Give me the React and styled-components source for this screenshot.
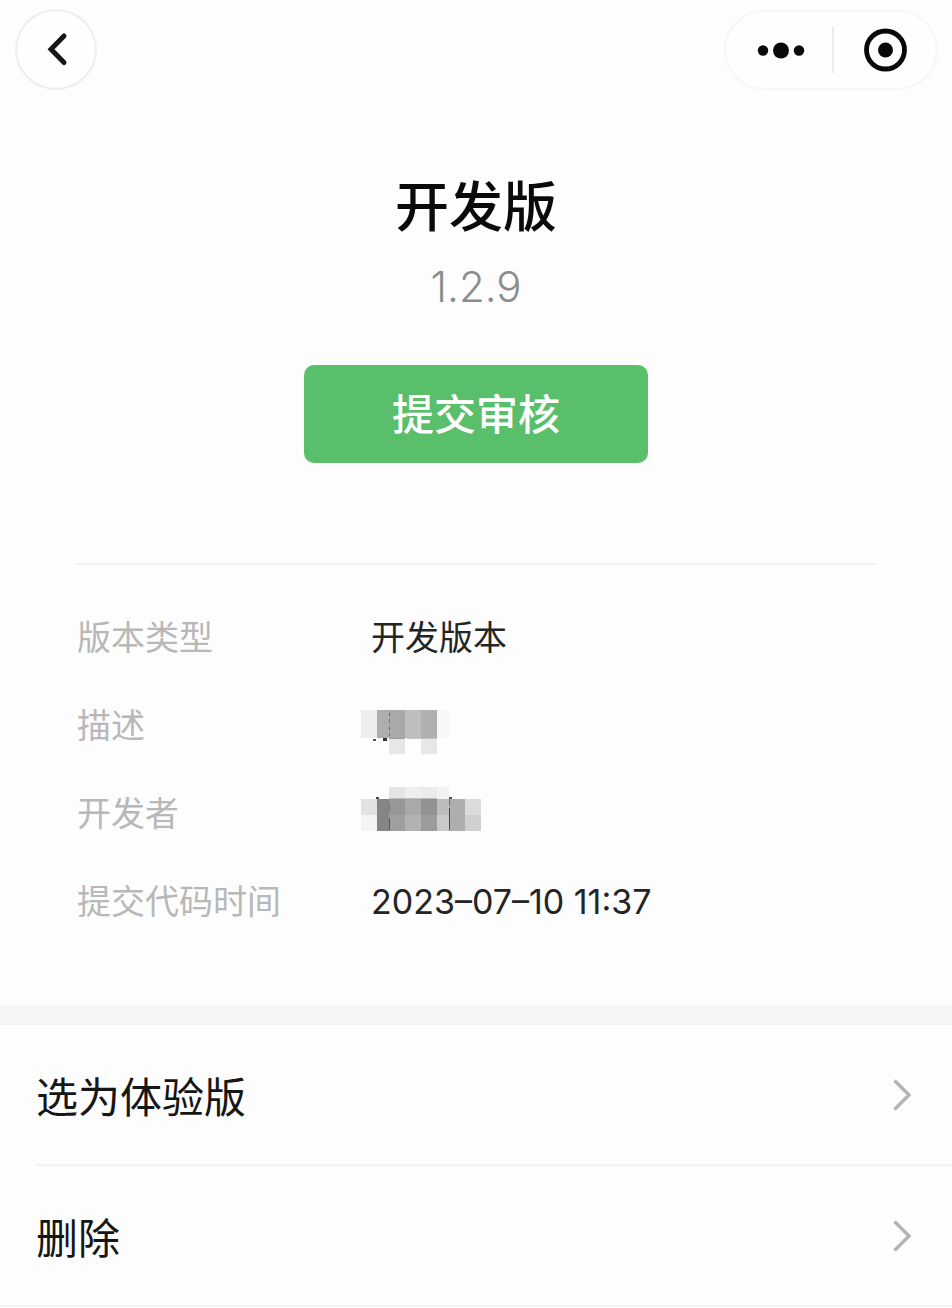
import React from 'react';
import styled, { createGlobalStyle } from 'styled-components';

const GlobalStyle = createGlobalStyle`
  * {
    box-sizing: border-box;
  }

  body {
    margin: 0;
    background: #fdfdfd;
    color: #1a1a1a;
    font-family: Inter, "Noto Sans CJK SC", sans-serif;
  }

  button {
    font-family: inherit;
    cursor: pointer;
  }
`;

const NavBar = styled.header`
  display: flex;
  justify-content: space-between;
  align-items: center;
  padding: 9px 14px 0 15px;
`;

const BackButton = styled.button`
  display: flex;
  width: 82px;
  height: 81px;
  padding: 0;
  border: 2px solid #eeeeee;
  border-radius: 50%;
  background: #fefefe;
`;

const Capsule = styled.div`
  display: flex;
  align-items: center;
  width: 214px;
  height: 80px;
  padding-left: 4px;
  border: 2px solid #f6f6f6;
  border-radius: 40px;
  background: #fefefe;
`;

const CapsuleButton = styled.button`
  display: flex;
  flex: 1;
  justify-content: center;
  align-items: center;
  height: 100%;
  padding: 0;
  border: 0;
  background: none;
`;

const CapsuleDivider = styled.span`
  width: 2px;
  height: 46px;
  background: #ececec;
`;

const Hero = styled.section`
  display: flex;
  flex-direction: column;
  align-items: center;
  padding: 80px 76px 100px;
`;

const Title = styled.h1`
  margin: 0;
  color: #0a0a0a;
  font-size: 54px;
  font-weight: 500;
  line-height: 76px;
`;

const Version = styled.p`
  margin: 15px 0 52px;
  color: #8c8c8c;
  font-size: 42px;
  font-weight: 300;
  line-height: 52px;
`;

const SubmitButton = styled.button`
  min-width: 344px;
  padding: 20px 40px 18px;
  border: 0;
  border-radius: 10px;
  background: #5abf6b;
  color: #ffffff;
  font-size: 42px;
  font-weight: 500;
  line-height: 60px;
`;

const Details = styled.dl`
  display: flex;
  flex-direction: column;
  gap: 38px;
  margin: 0 76px;
  padding: 48px 0 78px;
  border-top: 2px solid #f1f1f1;
`;

const DetailRow = styled.div`
  display: grid;
  grid-template-columns: 294px 1fr;
  padding-left: 1px;
  font-size: 34px;
  line-height: 50px;
`;

const Label = styled.dt`
  color: #b8b8b8;
`;

const Value = styled.dd`
  height: 50px;
  margin: 0;
  color: #242424;
`;

const Mosaic = styled.svg`
  display: block;
  margin-left: -10px;
  overflow: visible;
`;

const Actions = styled.nav`
  border-top: 20px solid #f5f5f5;
  border-bottom: 2px solid #f3f3f3;
`;

const ActionRow = styled.button`
  display: flex;
  justify-content: space-between;
  align-items: center;
  width: calc(100% - 36px);
  margin-left: 36px;
  padding: 40px 40px 40px 0;
  border: 0;
  border-bottom: ${props => (props.$last ? '0' : '2px solid #f3f3f3')};
  background: none;
  color: #161616;
  font-size: 42px;
  line-height: 53px;
  text-align: left;
`;

const ActionText = styled.span`
  padding-top: 6px;
`;

// each cell: x, y, width, height, fill
const descriptionCells = [
  [0, 9, 16, 28, '#eeeeee'],
  [16, 9, 12, 28, '#adadad'],
  [28, 9, 16, 28, '#a9a9a9'],
  [44, 9, 16, 28, '#bebebe'],
  [60, 9, 16, 28, '#b0b0b0'],
  [76, 9, 12, 28, '#f8f8f8'],
  [28, 37, 16, 16, '#e7e7e7'],
  [60, 37, 16, 16, '#e7e7e7'],
  [12, 38, 3, 2, '#555555'],
  [22, 37, 4, 3, '#333333'],
  [28, 37, 16, 1, '#999999'],
  [46, 37, 30, 1, '#c4c4c4'],
  [28, 12, 1, 3, '#666666'],
  [28, 18, 1, 4, '#777777'],
  [28, 26, 1, 3, '#666666'],
  [28, 32, 1, 3, '#777777'],
];

const developerCells = [
  [28, -2, 16, 12, '#e4e4e4'],
  [44, -2, 16, 12, '#eeeeee'],
  [60, -2, 16, 12, '#ebebeb'],
  [76, -2, 12, 12, '#f3f3f3'],
  [0, 10, 16, 16, '#e2e2e2'],
  [0, 26, 16, 16, '#f4f4f4'],
  [16, 10, 12, 32, '#858585'],
  [28, 10, 16, 16, '#979797'],
  [28, 26, 16, 16, '#9f9f9f'],
  [44, 10, 16, 16, '#a9a9a9'],
  [44, 26, 16, 16, '#b2b2b2'],
  [60, 10, 16, 16, '#929292'],
  [60, 26, 16, 16, '#9b9b9b'],
  [76, 10, 12, 16, '#bcbcbc'],
  [76, 26, 12, 16, '#cacaca'],
  [88, 10, 16, 32, '#aeaeae'],
  [104, 10, 16, 16, '#dcdcdc'],
  [104, 26, 16, 16, '#d0d0d0'],
  [15, 8, 3, 2, '#444444'],
  [28, 9, 48, 1, '#bbbbbb'],
  [88, 8, 3, 2, '#555555'],
  [28, 14, 1, 8, '#777777'],
  [28, 29, 1, 12, '#555555'],
  [88, 10, 1, 7, '#777777'],
  [88, 19, 1, 22, '#484848'],
];

const Pixels = ({ cells }) => (
  <Mosaic width="120" height="48" aria-hidden="true" shapeRendering="crispEdges">
    {cells.map(([x, y, width, height, fill], index) => (
      <rect key={index} x={x} y={y} width={width} height={height} fill={fill} />
    ))}
  </Mosaic>
);

const Chevron = () => (
  <svg width="20" height="34" viewBox="0 0 20 34" fill="none" aria-hidden="true">
    <path d="M2.5 2.5L17 17L2.5 31.5" stroke="#b4b4b4" strokeWidth="3.4" />
  </svg>
);

const details = [
  { label: '版本类型', value: '开发版本' },
  { label: '描述', value: <Pixels cells={descriptionCells} /> },
  { label: '开发者', value: <Pixels cells={developerCells} /> },
  { label: '提交代码时间', value: '2023–07–10 11:37' },
];

const actions = ['选为体验版', '删除'];

function App() {
  return (
    <>
      <GlobalStyle />
      <NavBar>
        <BackButton aria-label="返回">
          <svg width="78" height="77" viewBox="0 0 78 77" fill="none">
            <path
              d="M47 25L34 38.3L47 51.5"
              stroke="#161616"
              strokeWidth="5"
              strokeLinecap="round"
            />
          </svg>
        </BackButton>
        <Capsule>
          <CapsuleButton aria-label="更多">
            <svg width="50" height="20" viewBox="0 0 50 20" fill="#080808">
              <circle cx="7" cy="10.5" r="5.2" />
              <circle cx="25" cy="10.5" r="8" />
              <circle cx="43" cy="10.5" r="5.2" />
            </svg>
          </CapsuleButton>
          <CapsuleDivider />
          <CapsuleButton aria-label="关闭">
            <svg width="46" height="46" viewBox="0 0 46 46" fill="none">
              <circle cx="23.5" cy="23" r="19" stroke="#080808" strokeWidth="4.8" />
              <circle cx="23.5" cy="23" r="7.5" fill="#080808" />
            </svg>
          </CapsuleButton>
        </Capsule>
      </NavBar>
      <main>
        <Hero>
          <Title>开发版</Title>
          <Version>1.2.9</Version>
          <SubmitButton>提交审核</SubmitButton>
        </Hero>
        <Details>
          {details.map(({ label, value }) => (
            <DetailRow key={label}>
              <Label>{label}</Label>
              <Value>{value}</Value>
            </DetailRow>
          ))}
        </Details>
        <Actions>
          {actions.map((text, index) => (
            <ActionRow key={text} $last={index === actions.length - 1}>
              <ActionText>{text}</ActionText>
              <Chevron />
            </ActionRow>
          ))}
        </Actions>
      </main>
    </>
  );
}

export default App;
